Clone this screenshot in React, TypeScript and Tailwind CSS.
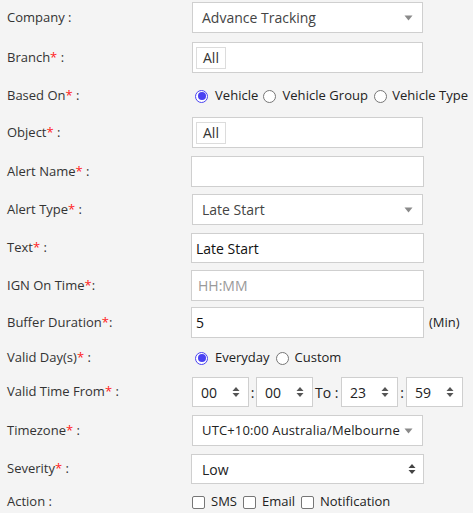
import React from "react";

const FONT = { fontFamily: '"Open Sans", "Liberation Sans", sans-serif' };

function Req() {
  return <span className="text-[#ff2020]">*</span>;
}

function Label({ text, req, colon = " :" }: { text: string; req?: boolean; colon?: string }) {
  return (
    <div className="w-[192px] shrink-0 pl-[7px] text-[13px] text-[#333]">
      {text}
      {req && <Req />}
      {colon}
    </div>
  );
}

function Caret() {
  return (
    <svg width="9" height="6" viewBox="0 0 9 6" className="shrink-0">
      <path d="M0.5 0.5 L8.5 0.5 L4.5 5.5 Z" fill="#8a8a8a" />
    </svg>
  );
}

function UpDown({ color = "#555" }: { color?: string }) {
  return (
    <svg width="8" height="12" viewBox="0 0 8 12" className="shrink-0">
      <path d="M0.5 5 L4 1 L7.5 5 Z" fill={color} />
      <path d="M0.5 7 L4 11 L7.5 7 Z" fill={color} />
    </svg>
  );
}

function Radio({ checked }: { checked?: boolean }) {
  return checked ? (
    <span className="w-[13px] h-[13px] rounded-full border border-[#4a42f2] bg-white flex items-center justify-center shrink-0">
      <span className="w-[8px] h-[8px] rounded-full bg-[#4a42f2]" />
    </span>
  ) : (
    <span className="w-[13px] h-[13px] rounded-full border border-[#767676] bg-white shrink-0" />
  );
}

function Check() {
  return <span className="w-[13px] h-[13px] rounded-[2px] border border-[#767676] bg-white shrink-0" />;
}

function SelectBox({ value, mono }: { value: string; mono?: boolean }) {
  return (
    <div className="w-[231px] h-full bg-white border border-[#cfcfcf] flex items-center pl-[9px] pr-[9px]">
      <span className={mono ? "flex-1 text-[13px] tracking-[0.15px] text-[#222]" : "flex-1 text-[14px] text-[#444]"}>
        {value}
      </span>
      <Caret />
    </div>
  );
}

function Chip() {
  return (
    <div className="w-[231px] h-full bg-white border border-[#cfcfcf] flex items-center pl-[3px]">
      <span className="h-[22px] px-[6px] border border-[#dcdcdc] bg-white flex items-center text-[14px] text-[#333]">
        All
      </span>
    </div>
  );
}

function TextBox({ value, placeholder }: { value?: string; placeholder?: string }) {
  return (
    <div className="w-[233px] -ml-[1px] h-full bg-white border border-[#cfcfcf] flex items-center pl-[4px] text-[14px]">
      {value ? <span className="text-[#111]">{value}</span> : <span className="text-[#9a9a9a] pl-[2px]">{placeholder}</span>}
    </div>
  );
}

function Spin({ value }: { value: string }) {
  return (
    <div className="w-[57px] h-full bg-white border border-[#cfcfcf] flex items-center pl-[8px] pr-[8px]">
      <span className="flex-1 text-[14px] text-[#222]">{value}</span>
      <UpDown />
    </div>
  );
}

function Row({ h, mt, children }: { h: number; mt: number; children: React.ReactNode }) {
  return (
    <div className="flex items-center" style={{ height: h, marginTop: mt }}>
      {children}
    </div>
  );
}

export default function App() {
  return (
    <div className="w-[473px] h-[513px] bg-[#f4f4f4] overflow-hidden" style={FONT}>
      <Row h={31} mt={2}>
        <Label text="Company" />
        <SelectBox value="Advance Tracking" />
      </Row>
      <Row h={31} mt={9}>
        <Label text="Branch" req />
        <Chip />
      </Row>
      <Row h={30} mt={8}>
        <Label text="Based On" req />
        <div className="flex items-center text-[13px] text-[#222] tracking-[0.05px]">
          <span className="ml-[3px] mr-[7px] flex"><Radio checked /></span>
          <span>Vehicle</span>
          <span className="ml-[5px] mr-[6px] flex"><Radio /></span>
          <span>Vehicle Group</span>
          <span className="ml-[6px] mr-[5px] flex"><Radio /></span>
          <span className="whitespace-nowrap">Vehicle Type</span>
        </div>
      </Row>
      <Row h={31} mt={6}>
        <Label text="Object" req />
        <Chip />
      </Row>
      <Row h={31} mt={8}>
        <Label text="Alert Name" req />
        <TextBox />
      </Row>
      <Row h={31} mt={7}>
        <Label text="Alert Type" req />
        <SelectBox value="Late Start" />
      </Row>
      <Row h={30} mt={8}>
        <Label text="Text" req />
        <TextBox value="Late Start" />
      </Row>
      <Row h={31} mt={7}>
        <Label text="IGN On Time" req colon=":" />
        <TextBox placeholder="HH:MM" />
      </Row>
      <Row h={31} mt={6}>
        <Label text="Buffer Duration" req colon=":" />
        <TextBox value="5" />
        <span className="ml-[5px] text-[13px] text-[#222]">(Min)</span>
      </Row>
      <Row h={30} mt={5}>
        <Label text="Valid Day(s)" req />
        <div className="flex items-center text-[13px] text-[#222]">
          <span className="ml-[3px] mr-[7px] flex"><Radio checked /></span>
          <span>Everyday</span>
          <span className="ml-[6px] mr-[6px] flex"><Radio /></span>
          <span>Custom</span>
        </div>
      </Row>
      <Row h={30} mt={4}>
        <Label text="Valid Time From" req />
        <div className="flex items-center h-full text-[14px] text-[#222]">
          <Spin value="00" />
          <span className="w-[7px] text-center">:</span>
          <Spin value="00" />
          <span className="w-[28px] pl-[2px] whitespace-nowrap">To :</span>
          <Spin value="23" />
          <span className="w-[8px] text-center">:</span>
          <Spin value="59" />
        </div>
      </Row>
      <Row h={31} mt={8}>
        <Label text="Timezone" req />
        <SelectBox value="UTC+10:00 Australia/Melbourne" mono />
      </Row>
      <Row h={30} mt={8}>
        <Label text="Severity" req />
        <div className="w-[233px] -ml-[1px] h-full bg-white border border-[#cfcfcf] flex items-center pl-[10px] pr-[7px]">
          <span className="flex-1 text-[14px] text-[#222]">Low</span>
          <UpDown color="#444" />
        </div>
      </Row>
      <Row h={26} mt={5}>
        <Label text="Action" />
        <div className="flex items-center text-[13px] text-[#222]">
          <span className="mr-[6px] flex"><Check /></span>
          <span>SMS</span>
          <span className="ml-[6px] mr-[6px] flex"><Check /></span>
          <span>Email</span>
          <span className="ml-[6px] mr-[6px] flex"><Check /></span>
          <span>Notification</span>
        </div>
      </Row>
    </div>
  );
}
